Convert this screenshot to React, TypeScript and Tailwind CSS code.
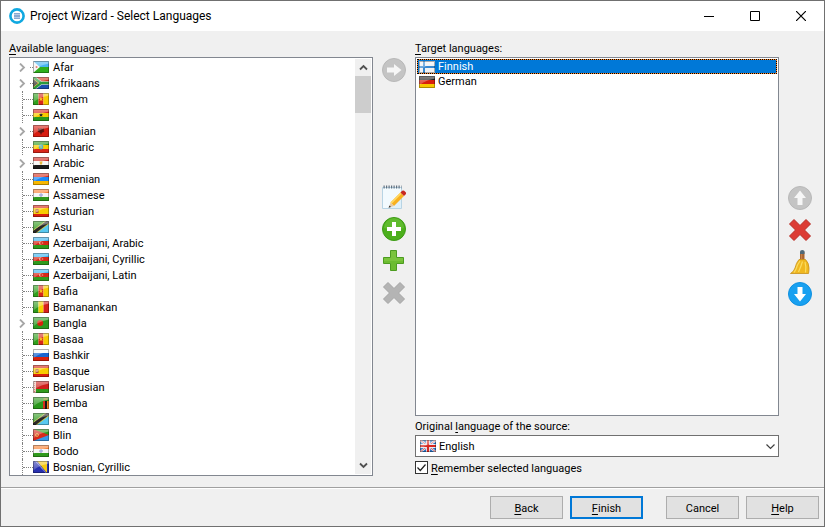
import React, { useId, useState } from "react";
import clsx from "clsx";

type FlagCode =
  | "dj" | "za" | "cm" | "gh" | "al" | "et" | "eg" | "am" | "in" | "es" | "tz"
  | "az" | "ml" | "bd" | "ru" | "by" | "zm" | "er" | "ba" | "fi" | "de" | "gb";

interface Language {
  name: string;
  flag: FlagCode;
  expandable?: boolean;
}

const availableLanguages: Language[] = [
  { name: "Afar", flag: "dj", expandable: true },
  { name: "Afrikaans", flag: "za", expandable: true },
  { name: "Aghem", flag: "cm" },
  { name: "Akan", flag: "gh" },
  { name: "Albanian", flag: "al", expandable: true },
  { name: "Amharic", flag: "et" },
  { name: "Arabic", flag: "eg", expandable: true },
  { name: "Armenian", flag: "am" },
  { name: "Assamese", flag: "in" },
  { name: "Asturian", flag: "es" },
  { name: "Asu", flag: "tz" },
  { name: "Azerbaijani, Arabic", flag: "az" },
  { name: "Azerbaijani, Cyrillic", flag: "az" },
  { name: "Azerbaijani, Latin", flag: "az" },
  { name: "Bafia", flag: "cm" },
  { name: "Bamanankan", flag: "ml" },
  { name: "Bangla", flag: "bd", expandable: true },
  { name: "Basaa", flag: "cm" },
  { name: "Bashkir", flag: "ru" },
  { name: "Basque", flag: "es" },
  { name: "Belarusian", flag: "by" },
  { name: "Bemba", flag: "zm" },
  { name: "Bena", flag: "tz" },
  { name: "Blin", flag: "er" },
  { name: "Bodo", flag: "in" },
  { name: "Bosnian, Cyrillic", flag: "ba" },
];

const targetLanguages: Language[] = [
  { name: "Finnish", flag: "fi" },
  { name: "German", flag: "de" },
];

const rows = (a: string, b: string, c: string) => (
  <>
    <path fill={a} d="M0 0h16v4H0z" />
    <path fill={b} d="M0 4h16v4H0z" />
    <path fill={c} d="M0 8h16v4H0z" />
  </>
);

const columns = (a: string, b: string, c: string) => (
  <>
    <path fill={a} d="M0 0h5.5v12H0z" />
    <path fill={b} d="M5.5 0h5v12h-5z" />
    <path fill={c} d="M10.5 0H16v12h-5.5z" />
  </>
);

const flags: Record<FlagCode, React.ReactNode> = {
  dj: (
    <>
      <path fill="#48b4f0" d="M0 0h16v6H0z" />
      <path fill="#2fae1c" d="M0 6h16v6H0z" />
      <path fill="#f4f4f4" d="M0 0l7 6-7 6z" />
      <circle cx="3.5" cy="6" r="1" fill="#e05040" />
    </>
  ),
  za: (
    <>
      <path fill="#d8301c" d="M0 0h16v6H0z" />
      <path fill="#1c4fb0" d="M0 6h16v6H0z" />
      <path fill="none" stroke="#e8e8e8" strokeWidth="3.6" d="M0 0l8 6-8 6M8 6h8" />
      <path fill="none" stroke="#2c9a3c" strokeWidth="2.6" d="M0 0l8 6-8 6M8 6h8" />
      <path fill="#e8b820" d="M0 1.500L6 6l-6 4.500z" />
      <path fill="#383838" d="M0 2L5 6 0 10z" />
    </>
  ),
  cm: (
    <>
      {columns("#2fa01c", "#d8261a", "#f8cc00")}
      <path fill="#f8c020" d="M8 4l.7 1.300h1.300L9 6.300l.6 1.700L8 7.200 6.400 8 7 6.300 6 5.300h1.300z" />
    </>
  ),
  gh: (
    <>
      {rows("#d8261a", "#f8cc00", "#2a9a1a")}
      <path fill="#222" d="M8 4l.6 1.300H10L9 6.200l.4 1.500L8 6.900l-1.400.8.400-1.500-1-.9h1.400z" />
    </>
  ),
  al: (
    <>
      <path fill="#d81c10" d="M0 0h16v12H0z" />
      <path fill="#5a1410" d="M5 3l2 1 1-1 1 1 2-1-.3 2.500.8.500-1.500 1.500L9 7.500 8 10 7 7.500H6L4.500 6l.8-.5z" />
    </>
  ),
  et: (
    <>
      {rows("#2f9a1c", "#f8cc00", "#d8261a")}
      <circle cx="8" cy="6" r="2.400" fill="#58b0c8" />
      <circle cx="8" cy="6" r="1" fill="#a8d080" />
    </>
  ),
  eg: (
    <>
      {rows("#d02820", "#f8f8f8", "#1c1c1c")}
      <path fill="#e8b840" d="M6.500 4.300h3L9 7.500H7z" />
    </>
  ),
  am: rows("#d83020", "#1c88f8", "#f8b800"),
  in: (
    <>
      {rows("#f88030", "#f4f4f4", "#2f9a1c")}
      <circle cx="8" cy="6" r="1.300" fill="#c8d0f0" stroke="#8890c8" strokeWidth=".8" />
    </>
  ),
  es: (
    <>
      <path fill="#d8200c" d="M0 0h16v12H0z" />
      <path fill="#f8cc00" d="M0 3h16v6H0z" />
      <path fill="#b05828" d="M2.500 4h3v4h-3z" />
      <path fill="#e0c0a0" d="M3.500 5h1v2h-1z" />
    </>
  ),
  tz: (
    <>
      <path fill="#2f9a1c" d="M0 0h16L0 12z" />
      <path fill="#58c8f0" d="M16 0v12H0z" />
      <path stroke="#d8c840" strokeWidth="4.600" d="M-1 12.750L17-.75" />
      <path stroke="#282828" strokeWidth="3.200" d="M-1 12.750L17-.75" />
    </>
  ),
  az: (
    <>
      {rows("#38b4f0", "#d82818", "#2f9a1c")}
      <circle cx="7.500" cy="6" r="1.500" fill="#f0b8a8" />
      <circle cx="8.100" cy="6" r="1" fill="#d82818" />
      <path fill="#f0b8a8" d="M9 5.500h1.200v1H9z" />
    </>
  ),
  ml: columns("#2f9a1c", "#f8d000", "#d8201c"),
  bd: (
    <>
      <path fill="#2a9a20" d="M0 0h16v12H0z" />
      <circle cx="7.200" cy="6" r="3" fill="#d8200c" />
    </>
  ),
  ru: rows("#f8f8f8", "#1864d0", "#d8200c"),
  by: (
    <>
      <path fill="#d0201c" d="M0 0h16v8H0z" />
      <path fill="#2f9a1c" d="M0 8h16v4H0z" />
      <path fill="#e8c8c0" d="M0 0h3v12H0z" />
      <path stroke="#d87868" strokeDasharray="1 1" d="M1.500 0v12" />
    </>
  ),
  zm: (
    <>
      <path fill="#2a981c" d="M0 0h16v12H0z" />
      <path fill="#d8301c" d="M10 4h2v8h-2z" />
      <path fill="#181818" d="M12 4h2v8h-2z" />
      <path fill="#f08020" d="M14 4h2v8h-2zM10.500 1.500h4v1h-4z" />
    </>
  ),
  er: (
    <>
      <path fill="#2f9a1c" d="M0 0h16v6H0z" />
      <path fill="#3898e8" d="M0 6h16v6H0z" />
      <path fill="#d8281c" d="M0 0l16 6-16 6z" />
      <circle cx="4" cy="6" r="1.500" fill="none" stroke="#e8a040" />
    </>
  ),
  ba: (
    <>
      <path fill="#2830b0" d="M0 0h16v12H0z" />
      <path fill="#f8c810" d="M4 0h10v12z" />
      <path stroke="#d8dcf0" strokeDasharray="1 .6" d="M2.500 0L13 12" />
    </>
  ),
  fi: (
    <>
      <path fill="#f0f2f4" d="M0 0h16v12H0z" />
      <path fill="#3888d0" d="M4 0h2v12H4zM0 5h16v2H0z" />
    </>
  ),
  de: rows("#202020", "#d8200c", "#f8c800"),
  gb: (
    <>
      <path fill="#2870c0" d="M0 0h16v12H0z" />
      <path stroke="#e8ecf4" strokeWidth="2.200" d="M0 0l16 12M16 0L0 12" />
      <path stroke="#d84038" strokeWidth=".8" d="M0 0l16 12M16 0L0 12" />
      <path stroke="#e8ecf4" strokeWidth="4" d="M8 0v12M0 6h16" />
      <path stroke="#d82820" strokeWidth="2.200" d="M8 0v12M0 6h16" />
    </>
  ),
};

const Flag = ({ code }: { code: FlagCode }) => {
  const gloss = useId();
  return (
    <svg width="16" height="12" viewBox="0 0 16 12" className="shrink-0 overflow-hidden" aria-hidden="true">
      <defs>
        <linearGradient id={gloss} x1="0" y1="0" x2="0" y2="1">
          <stop offset="0" stopColor="#fff" stopOpacity=".45" />
          <stop offset="1" stopColor="#fff" stopOpacity=".15" />
        </linearGradient>
      </defs>
      {flags[code]}
      <path fill={`url(#${gloss})`} d="M0 0h16v2.500C11 3.500 5 5 0 10z" />
      <path fill="none" stroke="#000" strokeOpacity=".3" d="M.5.5h15v11H.5z" />
    </svg>
  );
};

/* Label text with one underlined access key */
const Mnemonic = ({ text, at = 0 }: { text: string; at?: number }) => (
  <span>
    {text.slice(0, at)}
    <span className="underline underline-offset-2">{text[at]}</span>
    {text.slice(at + 1)}
  </span>
);

const TreeRow = ({ language }: { language: Language }) => (
  <li role="treeitem" className="flex h-4 items-center">
    {language.expandable ? (
      <span className="flex w-[23px] shrink-0 items-center justify-between pl-2">
        <svg width="8" height="9" viewBox="0 0 8 9" fill="none" aria-hidden="true">
          <path d="M2 .5l4 4-4 4" stroke="#a6a6a6" strokeWidth="1.800" />
        </svg>
        <span className="w-[3px] border-t border-dotted border-[#808080]" />
      </span>
    ) : (
      <span className="ml-3 flex h-4 w-[11px] shrink-0 items-center border-l border-dotted border-[#808080]">
        <span className="w-full border-t border-dotted border-[#808080]" />
      </span>
    )}
    <Flag code={language.flag} />
    <span className="pt-[2px] pl-1 leading-[14px]">{language.name}</span>
  </li>
);

const Scrollbar = () => (
  <div className="mt-px mb-px mr-px flex w-4 shrink-0 flex-col items-center bg-[#f0f0f0]">
    <button type="button" aria-label="Scroll up" className="flex h-[17px] items-center justify-center">
      <svg width="9" height="9" viewBox="0 0 9 9" fill="none" aria-hidden="true">
        <path d="M1 6.500L4.500 3 8 6.500" stroke="#505050" strokeWidth="1.800" />
      </svg>
    </button>
    <div className="h-[37px] w-full bg-[#cdcdcd]" />
    <button type="button" aria-label="Scroll down" className="mt-auto flex h-[17px] items-center justify-center">
      <svg width="9" height="9" viewBox="0 0 9 9" fill="none" aria-hidden="true">
        <path d="M1 2.500L4.500 6 8 2.500" stroke="#505050" strokeWidth="1.800" />
      </svg>
    </button>
  </div>
);

const IconButton = ({ label, children }: { label: string; children: React.ReactNode }) => (
  <button type="button" aria-label={label} className="size-6">
    <svg width="24" height="24" viewBox="0 0 24 24" aria-hidden="true">
      {children}
    </svg>
  </button>
);

const ARROW = "M5 9.500h7V6l7.500 6-7.500 6v-3.500H5z";
const CROSS = "M6 1.500l6 6 6-6L22.500 6l-6 6 6 6-4.500 4.500-6-6-6 6L1.500 18l6-6-6-6z";

const ArrowDisc = ({ fill, ring, arrow, rotate = 0 }: { fill: string; ring: string; arrow: string; rotate?: number }) => (
  <>
    <circle cx="12" cy="12" r="11.500" fill={fill} stroke={ring} />
    <path d={ARROW} fill={arrow} transform={`rotate(${rotate} 12 12)`} />
  </>
);

const DialogButton = ({ primary, children }: { primary?: boolean; children: React.ReactNode }) => (
  <button
    type="button"
    className={clsx(
      "h-[23px] w-[73px] bg-[#e1e1e1] pt-[2px]",
      primary ? "border-2 border-[#0078d7]" : "border border-[#adadad]"
    )}>
    {children}
  </button>
);

const TitleBar = () => (
  <header className="flex h-[30px] shrink-0 items-center bg-white pl-2">
    <svg width="16" height="16" viewBox="0 0 16 16" aria-hidden="true">
      <circle cx="8" cy="8" r="6.600" fill="#fff" stroke="#10a8e0" strokeWidth="2.600" />
      <path fill="#8aa8d0" d="M5 5h6v6H5z" />
      <path stroke="#b8cce4" d="M5 6.500h6M5 9.500h6" />
    </svg>
    <h1 className="pl-[5px] text-[12px]">Project Wizard - Select Languages</h1>
    <div className="ml-auto flex">
      <button type="button" aria-label="Minimize" className="flex h-[29px] w-[46px] items-center justify-center">
        <svg width="10" height="10" viewBox="0 0 10 10" aria-hidden="true">
          <path d="M0 5.500h10" stroke="#000" />
        </svg>
      </button>
      <button type="button" aria-label="Maximize" className="flex h-[29px] w-[46px] items-center justify-center">
        <svg width="10" height="10" viewBox="0 0 10 10" fill="none" aria-hidden="true">
          <path d="M.5.5h9v9h-9z" stroke="#000" />
        </svg>
      </button>
      <button type="button" aria-label="Close" className="flex h-[29px] w-[46px] items-center justify-center">
        <svg width="10" height="10" viewBox="0 0 10 10" fill="none" aria-hidden="true">
          <path d="M0 0l10 10M10 0L0 10" stroke="#000" strokeWidth="1.200" />
        </svg>
      </button>
    </div>
  </header>
);

const App = () => {
  const [remember, setRemember] = useState(true);
  const [selected, setSelected] = useState("Finnish");

  return (
    <div className="flex h-screen flex-col overflow-hidden border border-[#707070] bg-[#f0f0f0] font-[Roboto,sans-serif] text-[11px] leading-4 text-black">
      <TitleBar />

      <main className="flex min-h-0 flex-1 pt-[10px] pb-[11px] pl-2">
        <section className="flex min-w-0 flex-1 flex-col">
          <h2 id="available" className="h-4">
            <Mnemonic text="Available languages:" />
          </h2>
          <div className="flex min-h-0 flex-1 border border-[#828790] bg-white">
            <ul role="tree" aria-labelledby="available" className="min-w-0 flex-1 overflow-hidden pt-px">
              {availableLanguages.map((language) => (
                <TreeRow key={language.name} language={language} />
              ))}
            </ul>
            <Scrollbar />
          </div>
        </section>

        <div className="flex w-[42px] shrink-0 flex-col items-center pt-[17px]">
          <IconButton label="Add to target languages">
            <ArrowDisc fill="#c4c4c4" ring="#b8b8b8" arrow="#f6f6f6" />
          </IconButton>
          <div className="flex flex-col gap-2 pt-[103px]">
            <IconButton label="Edit language">
              <path fill="#dff0fa" stroke="#b8d4e4" d="M.5 2.500h19v21H.5z" />
              <path fill="#f2fafe" d="M1 3h18v8L7 23H1z" />
              <path stroke="#607080" strokeWidth="3" strokeDasharray="1.200 1.300" d="M1.500 2h18" />
              <path fill="#f8b020" d="M8.500 17.500L18.500 7.500l3.500 3.500L12 21z" />
              <path fill="#ffd860" d="M8.500 17.500L18.500 7.500l1.200 1.200L9.700 18.700z" />
              <path fill="#c82820" d="M18.500 7.500l1.700-1.700q1-.8 2 0l1.500 1.500q.8 1 0 2L22 11z" />
              <path fill="#e8c8a0" d="M8.500 17.500L12 21l-5 1.500z" />
              <path fill="#303030" d="M7.500 20.500l1.500 1.500-2.500.8z" />
            </IconButton>
            <IconButton label="Add language">
              <circle cx="12" cy="12" r="11.500" fill="#4caf1c" stroke="#3c9a14" />
              <path fill="#74c840" d="M2 11a10 10 0 0 1 20 0q-10 3-20 0z" opacity=".5" />
              <path fill="#fff" d="M10 5h4v5h5v4h-5v5h-4v-5H5v-4h5z" />
            </IconButton>
            <IconButton label="Add custom language">
              <path fill="#6cbc30" stroke="#4c9c20" d="M8.500 1.500h6v7h7v6h-7v7h-6v-7h-7v-6h7z" />
              <path fill="#90d050" d="M9 2h5v7h7v3H2V9h7z" opacity=".4" />
            </IconButton>
            <IconButton label="Delete language">
              <path fill="#b4b4b4" stroke="#a4a4a4" d={CROSS} />
            </IconButton>
          </div>
        </div>

        <section className="flex min-w-0 flex-1 flex-col">
          <h2 id="target" className="h-4">
            <Mnemonic text="Target languages:" />
          </h2>
          <ul role="listbox" aria-labelledby="target" className="min-h-0 flex-1 border border-[#828790] bg-white p-px">
            {targetLanguages.map((language) => (
              <li
                key={language.name}
                role="option"
                aria-selected={selected === language.name}
                onClick={() => setSelected(language.name)}
                className={clsx(
                  "flex h-[15px] items-center gap-[3px] border pl-px leading-[13px]",
                  selected === language.name
                    ? "border-[#ff8728] bg-[#0078d7] text-white outline-1 -outline-offset-1 outline-dotted outline-black"
                    : "border-transparent"
                )}>
                <Flag code={language.flag} />
                <span>{language.name}</span>
              </li>
            ))}
          </ul>

          <label htmlFor="source" className="flex h-[19px] items-center pt-[2px]">
            <Mnemonic text="Original language of the source:" at={9} />
          </label>
          <div className="relative flex items-center">
            <select
              id="source"
              defaultValue="English"
              className="h-[22px] w-full appearance-none rounded-none border border-[#707070] bg-white pt-[2px] pl-[23px]">
              <option>English</option>
              <option>Finnish</option>
              <option>German</option>
            </select>
            <span className="pointer-events-none absolute left-[5px]">
              <Flag code="gb" />
            </span>
            <svg width="9" height="9" viewBox="0 0 9 9" fill="none" className="pointer-events-none absolute right-1" aria-hidden="true">
              <path d="M.5 2.500l4 4 4-4" stroke="#404040" strokeWidth="1.200" />
            </svg>
          </div>
          <label className="mt-1 flex h-[15px] items-start gap-[3px] leading-4">
            <span className="relative flex size-[13px]">
              <input
                type="checkbox"
                checked={remember}
                onChange={(e) => setRemember(e.target.checked)}
                className="size-[13px] appearance-none border border-[#333] bg-white"
              />
              {remember && (
                <svg width="13" height="13" viewBox="0 0 13 13" fill="none" className="pointer-events-none absolute" aria-hidden="true">
                  <path d="M2.500 6.500l2.800 3 5.200-6" stroke="#202020" strokeWidth="1.200" />
                </svg>
              )}
            </span>
            <Mnemonic text="Remember selected languages" />
          </label>
        </section>

        <div className="flex w-[45px] shrink-0 flex-col items-center gap-2 pt-[145px] pr-1">
          <IconButton label="Move up">
            <ArrowDisc fill="#c4c4c4" ring="#b8b8b8" arrow="#f6f6f6" rotate={-90} />
          </IconButton>
          <IconButton label="Remove from target languages">
            <path fill="#dc3c34" stroke="#b82c24" d={CROSS} />
          </IconButton>
          <IconButton label="Clear target languages">
            <path fill="#a86430" d="M12 2h4.500v9H12z" />
            <path fill="#c88048" d="M13 4h1.200v7H13z" />
            <path fill="#506878" d="M12 1.500Q12 0 14.250 0t2.250 1.500V4H12z" />
            <path fill="#f0b820" stroke="#c89018" strokeWidth=".8" d="M11 9.500h6.500Q21 13 21 18q0 3-.5 5.500h-18q3.500-2 4.500-5.500 1-5 4-8.500z" />
            <path fill="none" stroke="#fadc60" strokeWidth="1.200" d="M12 11q-3 4-4 8-1 2-2 3.500M14.500 11.500q-1.500 5-4 10.500M17 12q1.500 5 .5 10.500" />
          </IconButton>
          <IconButton label="Move down">
            <ArrowDisc fill="#18a0f0" ring="#1090e0" arrow="#fff" rotate={90} />
          </IconButton>
        </div>
      </main>

      <footer className="flex shrink-0 items-center justify-end gap-[7px] border-t border-[#a0a0a0] pr-[5px] pb-[7px] pt-2 shadow-[inset_0_1px_0_#fff]">
        <DialogButton>
          <Mnemonic text="Back" />
        </DialogButton>
        <DialogButton primary>
          <Mnemonic text="Finish" />
        </DialogButton>
        <span className="w-[9px]" />
        <DialogButton>Cancel</DialogButton>
        <DialogButton>
          <Mnemonic text="Help" />
        </DialogButton>
      </footer>
    </div>
  );
};

export default App;
